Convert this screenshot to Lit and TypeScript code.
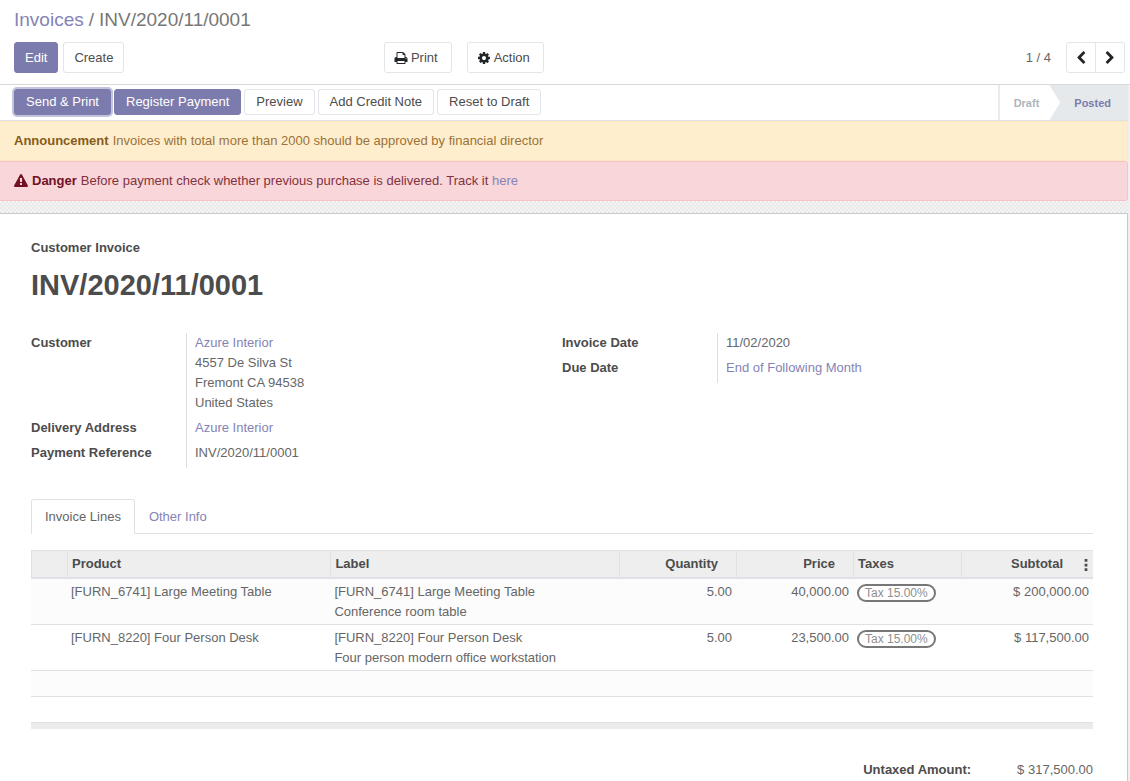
import { LitElement, html, css, svg } from "lit";
import { customElement, property, state } from "lit/decorators.js";

const ICONS: Record<string, string> = {
  print:
    "M448 1536h896v-256h-896v256zm0-640h896v-384h-160q-40 0-68-28t-28-68v-160h-640v640zm1152 64q0-26-19-45t-45-19-45 19-19 45 19 45 45 19 45-19 19-45zm128 0v416q0 13-9.5 22.5t-22.5 9.5h-224v160q0 40-28 68t-68 28h-960q-40 0-68-28t-28-68v-160h-224q-13 0-22.5-9.5t-9.5-22.5v-416q0-79 56.5-135.5t135.5-56.5h64v-544q0-40 28-68t68-28h672q40 0 88 20t76 48l152 152q28 28 48 76t20 88v256h64q79 0 135.5 56.5t56.5 135.5z",
  cog: "M1152 896q0-106-75-181t-181-75-181 75-75 181 75 181 181 75 181-75 75-181zm512-109v222q0 12-8 23t-20 13l-185 28q-19 54-39 91 35 50 107 138 10 12 10 25t-9 23q-27 37-99 108t-94 71q-12 0-26-9l-138-108q-44 23-91 38-16 136-29 186-7 28-36 28h-222q-14 0-24.5-8.5t-11.5-21.5l-28-184q-49-16-90-37l-141 107q-10 9-25 9-14 0-25-11-126-114-165-168-7-10-7-23 0-12 8-23 15-21 51-66.5t54-70.5q-27-50-41-99l-183-27q-13-2-21-12.5t-8-23.5v-222q0-12 8-23t19-13l186-28q14-46 39-92-40-57-107-138-10-12-10-24 0-10 9-23 26-36 98.5-107.5t94.5-71.5q13 0 26 10l138 107q44-23 91-38 16-136 29-186 7-28 36-28h222q14 0 24.5 8.5t11.5 21.5l28 184q49 16 90 37l142-107q9-9 24-9 13 0 25 10 129 119 165 170 7 8 7 22 0 12-8 23-15 21-51 66.5t-54 70.5q26 50 41 98l183 28q13 2 21 12.5t8 23.5z",
  left: "M1427 301l-531 531 531 531q19 19 19 45t-19 45l-166 166q-19 19-45 19t-45-19l-742-742q-19-19-19-45t19-45l742-742q19-19 45-19t45 19l166 166q19 19 19 45t-19 45z",
  right:
    "M1363 877l-742 742q-19 19-45 19t-45-19l-166-166q-19-19-19-45t19-45l531-531-531-531q-19-19-19-45t19-45l166-166q19-19 45-19t45 19l742 742q19 19 19 45t-19 45z",
  warning:
    "M1024 1375v-190q0-14-9.5-23.5t-22.5-9.5h-192q-13 0-22.5 9.5t-9.5 23.5v190q0 14 9.5 23.5t22.5 9.5h192q13 0 22.5-9.5t9.5-23.5zm-2-374l18-459q0-12-10-19-13-11-24-11h-220q-11 0-24 11-10 7-10 21l17 457q0 10 10 16.5t24 6.5h185q14 0 23.5-6.5t10.5-16.5zm-14-934l768 1408q35 63-2 126-17 29-46.5 46t-63.5 17h-1536q-34 0-63.5-17t-46.5-46q-37-63-2-126l768-1408q17-31 47-49t65-18 65 18 47 49z",
  more: "M720 130h352v352h-352zM720 720h352v352h-352zM720 1310h352v352h-352z",
};

@customElement("ui-icon")
class UiIcon extends LitElement {
  @property() name = "";
  static styles = css`
    :host {
      display: inline-flex;
      flex: none;
    }
    svg {
      width: 14px;
      height: 14px;
      fill: currentColor;
    }
  `;
  render() {
    return html`<svg viewBox="0 0 1792 1792" aria-hidden="true">
      ${svg`<path d=${ICONS[this.name]}></path>`}
    </svg>`;
  }
}

interface Line {
  product: string;
  label: string[];
  quantity: string;
  price: string;
  tax: string;
  subtotal: string;
}

const LINES: Line[] = [
  {
    product: "[FURN_6741] Large Meeting Table",
    label: ["[FURN_6741] Large Meeting Table", "Conference room table"],
    quantity: "5.00",
    price: "40,000.00",
    tax: "Tax 15.00%",
    subtotal: "$ 200,000.00",
  },
  {
    product: "[FURN_8220] Four Person Desk",
    label: ["[FURN_8220] Four Person Desk", "Four person modern office workstation"],
    quantity: "5.00",
    price: "23,500.00",
    tax: "Tax 15.00%",
    subtotal: "$ 117,500.00",
  },
];

@customElement("app-root")
class AppRoot extends LitElement {
  @state() private tab = 0;

  static styles = css`
    :host {
      display: flex;
      flex-direction: column;
      min-height: 100vh;
      font: 13px/20px "Liberation Sans", Arial, sans-serif;
      color: #666666;
      background: #ffffff;
    }
    * {
      box-sizing: border-box;
    }
    a {
      color: #8583b5;
      text-decoration: none;
    }
    button {
      font: inherit;
      margin: 0;
      cursor: pointer;
    }
    .panel {
      padding: 8px 5px 11px 14px;
      border-bottom: 1px solid #d9d9d9;
    }
    .crumbs {
      display: flex;
      gap: 5px;
      font-size: 19px;
      line-height: 24px;
      color: #777777;
    }
    .tools {
      display: flex;
      align-items: center;
      margin-top: 10px;
    }
    .group {
      display: flex;
      gap: 5px;
      flex: 0 0 33.3%;
    }
    .group .btn {
      padding: 0 10px;
    }
    .actions {
      display: flex;
      gap: 15px;
      flex: 1;
    }
    .btn {
      display: inline-flex;
      align-items: center;
      gap: 4px;
      height: 31px;
      padding: 0 9px;
      border: 1px solid #e2e5e9;
      border-radius: 3px;
      background: #ffffff;
      color: #4c4c4c;
      white-space: nowrap;
    }
    .btn ui-icon {
      color: #222629;
    }
    .primary {
      background: #7c7bad;
      border-color: #7c7bad;
      color: #ffffff;
    }
    .drop {
      padding-right: 13px;
      gap: 3px;
    }
    .pager {
      display: flex;
      align-items: center;
      gap: 15px;
    }
    .pair {
      display: flex;
    }
    .pair .btn {
      width: 30px;
      padding: 0;
      justify-content: center;
    }
    .pair .btn:first-child {
      border-radius: 3px 0 0 3px;
    }
    .pair .btn:last-child {
      border-radius: 0 3px 3px 0;
      margin-left: -1px;
    }
    .content {
      flex: 1;
      display: flex;
      flex-direction: column;
      padding-right: 2px;
      background: #f0f0f0;
    }
    .statusbar {
      display: flex;
      justify-content: space-between;
      background: #ffffff;
      border-bottom: 1px solid #dee2e6;
    }
    .buttons {
      display: flex;
      gap: 3px;
      padding: 4px 0 5px 14px;
    }
    .buttons .btn {
      height: 26px;
      padding: 0 11px;
    }
    .buttons .focused {
      box-shadow: 0 0 0 2px #c4c3dc;
    }
    .steps {
      display: flex;
      font-size: 11px;
      font-weight: bold;
      border-left: 2px solid #e9ecef;
    }
    .step {
      display: flex;
      align-items: center;
      padding: 0 10px 0 14px;
      color: #adb5bd;
    }
    .current {
      padding: 0 17px 0 25px;
      color: #7c7bad;
      background: #e6e9ec;
      clip-path: polygon(0 0, 100% 0, 100% 100%, 0 100%, 11px 50%);
    }
    .alert {
      display: flex;
      align-items: center;
      gap: 4px;
      padding: 9px 14px;
      border: 1px solid;
      border-left: 0;
      border-radius: 0 3px 3px 0;
    }
    .warning {
      background: #ffeecd;
      border-color: #ffe8bd;
      color: #9a7238;
    }
    .warning strong {
      color: #855c1c;
    }
    .danger {
      background: #f9d6da;
      border-color: #f5c2c9;
      color: #82323e;
    }
    .danger strong,
    .danger ui-icon {
      color: #721124;
    }
    .canvas {
      flex: 1;
      display: flex;
      padding-top: 12px;
      background: repeating-conic-gradient(#e8e8e8 0 25%, #f4f4f4 0 50%) 0 0 / 4px 4px;
    }
    .sheet {
      flex: 1;
      min-width: 0;
      padding: 24px 34px 0 31px;
      background: #ffffff;
      border: 1px solid #c8c8d0;
      border-width: 1px 1px 0 0;
    }
    .kind {
      font-weight: bold;
      color: #4c4c4c;
    }
    h1 {
      margin: 10px 0 0;
      font-size: 29px;
      line-height: 34px;
      color: #4c4c4c;
    }
    .fields {
      display: grid;
      grid-template-columns: 1fr 1fr;
      align-items: start;
      margin-top: 31px;
    }
    dl {
      display: grid;
      grid-template-columns: 155px 1fr;
      margin: 0;
    }
    dt {
      padding-bottom: 5px;
      font-weight: bold;
      color: #4c4c4c;
    }
    dd {
      margin: 0;
      padding: 0 0 5px 8px;
      border-left: 1px solid #dddddd;
    }
    .tabs {
      display: flex;
      margin-top: 31px;
      border-bottom: 1px solid #dee2e6;
    }
    .tab {
      height: 34px;
      padding: 0 13px;
      border: 1px solid transparent;
      border-bottom: 0;
      border-radius: 3px 3px 0 0;
      background: #ffffff;
      color: #8583b5;
    }
    .tab[aria-selected="true"] {
      height: 35px;
      margin-bottom: -1px;
      border-color: #dee2e6;
      color: #666666;
    }
    table {
      width: 100%;
      margin-top: 16px;
      table-layout: fixed;
      border-collapse: separate;
      border-spacing: 0;
    }
    th {
      height: 29px;
      padding: 0 4px;
      text-align: left;
      background: #eeeeee;
      color: #4c4c4c;
      border: solid #dee2e6;
      border-width: 1px 0 2px 1px;
    }
    td {
      padding: 3px 4px 2px;
      vertical-align: top;
      border-bottom: 1px solid #dee2e6;
    }
    tbody tr:nth-child(odd) {
      background: #fcfcfc;
    }
    .w-handle {
      width: 36px;
    }
    .w-product {
      width: 24.8%;
    }
    .w-number {
      width: 117px;
    }
    .w-taxes {
      width: 108px;
    }
    .w-subtotal {
      width: 132px;
    }
    td.num {
      text-align: right;
    }
    th.num {
      text-align: right;
      padding-right: 18px;
    }
    .with-menu {
      display: flex;
      align-items: center;
      justify-content: flex-end;
      gap: 16px;
    }
    th.menu {
      padding-right: 0;
    }
    .more {
      display: flex;
      padding: 2px 0 0;
      border: 0;
      background: none;
      color: #4c4c4c;
    }
    .tag {
      display: inline-block;
      margin-top: 2px;
      padding: 0 6px;
      font-size: 12px;
      line-height: 14px;
      color: #8f8f8f;
      border: 2px solid #777777;
      border-radius: 9px;
      background: #ffffff;
      white-space: nowrap;
    }
    .empty td {
      height: 26px;
    }
    tfoot td {
      height: 6px;
      padding: 0;
      border: 0;
      background: #ebebec;
    }
    .totals {
      display: flex;
      justify-content: flex-end;
      gap: 46px;
      margin-top: 31px;
    }
    .totals strong {
      color: #4c4c4c;
    }
  `;

  private row(line: Line) {
    return html`<tr>
      <td></td>
      <td>${line.product}</td>
      <td>${line.label.map((text) => html`<div>${text}</div>`)}</td>
      <td class="num">${line.quantity}</td>
      <td class="num">${line.price}</td>
      <td><span class="tag">${line.tax}</span></td>
      <td class="num">${line.subtotal}</td>
    </tr>`;
  }

  render() {
    return html`
      <header class="panel">
        <nav class="crumbs" aria-label="Breadcrumb">
          <a href="#invoices">Invoices</a><span>/</span><span>INV/2020/11/0001</span>
        </nav>
        <div class="tools">
          <div class="group">
            <button class="btn primary">Edit</button>
            <button class="btn">Create</button>
          </div>
          <div class="actions">
            <button class="btn drop"><ui-icon name="print"></ui-icon>Print</button>
            <button class="btn drop"><ui-icon name="cog"></ui-icon>Action</button>
          </div>
          <div class="pager">
            <span>1 / 4</span>
            <div class="pair">
              <button class="btn" aria-label="Previous"><ui-icon name="left"></ui-icon></button>
              <button class="btn" aria-label="Next"><ui-icon name="right"></ui-icon></button>
            </div>
          </div>
        </div>
      </header>
      <main class="content">
        <div class="statusbar">
          <div class="buttons">
            <button class="btn primary focused">Send &amp; Print</button>
            <button class="btn primary">Register Payment</button>
            <button class="btn">Preview</button>
            <button class="btn">Add Credit Note</button>
            <button class="btn">Reset to Draft</button>
          </div>
          <div class="steps">
            <span class="step">Draft</span>
            <span class="step current">Posted</span>
          </div>
        </div>
        <div class="alert warning" role="status">
          <strong>Announcement</strong>
          <span>Invoices with total more than 2000 should be approved by financial director</span>
        </div>
        <div class="alert danger" role="alert">
          <ui-icon name="warning"></ui-icon>
          <strong>Danger</strong>
          <span
            >Before payment check whether previous purchase is delivered. Track it
            <a href="#track">here</a></span
          >
        </div>
        <div class="canvas">
          <section class="sheet">
            <div class="kind">Customer Invoice</div>
            <h1>INV/2020/11/0001</h1>
            <div class="fields">
              <dl>
                <dt>Customer</dt>
                <dd>
                  <a href="#customer">Azure Interior</a><br />4557 De Silva St<br />Fremont CA
                  94538<br />United States
                </dd>
                <dt>Delivery Address</dt>
                <dd><a href="#delivery">Azure Interior</a></dd>
                <dt>Payment Reference</dt>
                <dd>INV/2020/11/0001</dd>
              </dl>
              <dl>
                <dt>Invoice Date</dt>
                <dd>11/02/2020</dd>
                <dt>Due Date</dt>
                <dd><a href="#terms">End of Following Month</a></dd>
              </dl>
            </div>
            <div class="tabs" role="tablist">
              ${["Invoice Lines", "Other Info"].map(
                (name, i) => html`<button
                  class="tab"
                  role="tab"
                  aria-selected=${this.tab === i ? "true" : "false"}
                  @click=${() => (this.tab = i)}
                >
                  ${name}
                </button>`
              )}
            </div>
            <table>
              <colgroup>
                <col class="w-handle" />
                <col class="w-product" />
                <col />
                <col class="w-number" />
                <col class="w-number" />
                <col class="w-taxes" />
                <col class="w-subtotal" />
              </colgroup>
              <thead>
                <tr>
                  <th></th>
                  <th>Product</th>
                  <th>Label</th>
                  <th class="num">Quantity</th>
                  <th class="num">Price</th>
                  <th>Taxes</th>
                  <th class="menu">
                    <div class="with-menu">
                      Subtotal
                      <button class="more" aria-label="Optional columns">
                        <ui-icon name="more"></ui-icon>
                      </button>
                    </div>
                  </th>
                </tr>
              </thead>
              <tbody>
                ${LINES.map((line) => this.row(line))}
                <tr class="empty"><td colspan="7"></td></tr>
                <tr class="empty"><td colspan="7"></td></tr>
              </tbody>
              <tfoot>
                <tr><td colspan="7"></td></tr>
              </tfoot>
            </table>
            <div class="totals">
              <strong>Untaxed Amount:</strong>
              <span>$ 317,500.00</span>
            </div>
          </section>
        </div>
      </main>
    `;
  }
}
